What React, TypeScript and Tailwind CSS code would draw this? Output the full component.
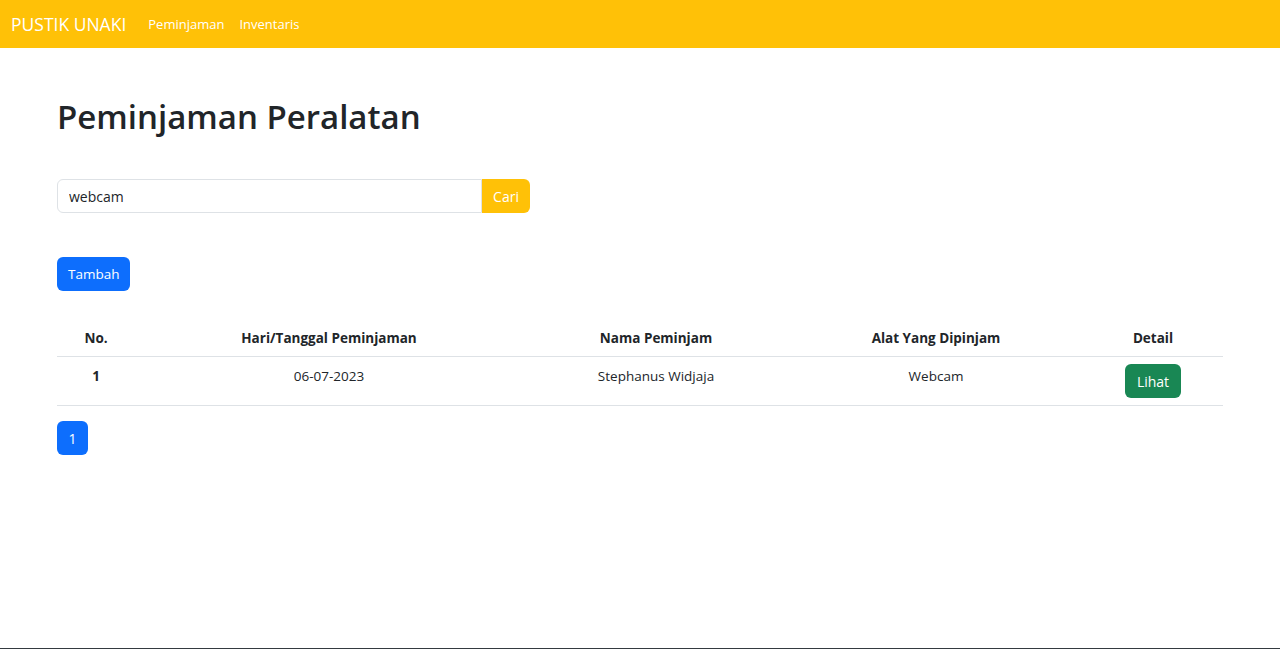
import { useState } from 'react'

const rows = [{ no: 1, tanggal: '06-07-2023', nama: 'Stephanus Widjaja', alat: 'Webcam' }]

export default function App() {
  const [q, setQ] = useState('webcam')

  return (
    <div className="bg-white text-[#212529] font-['Open_Sans','Noto_Sans',sans-serif]">
      <div className="min-h-[648px] flex flex-col">
        <nav className="h-12 bg-[#ffc107] flex items-center px-[11px] text-white">
          <span className="text-[17.5px] mr-[22px]">PUSTIK UNAKI</span>
          <a className="text-[13px] mr-[15px] pt-px" href="#">Peminjaman</a>
          <a className="text-[13px] pt-px" href="#">Inventaris</a>
        </nav>

        <main className="flex-1 px-[57px] pt-[45px] pb-12">
          <h1 className="text-[33px] leading-[48px] font-semibold mb-[38px]">Peminjaman Peralatan</h1>

          <form className="flex w-[473px] h-[34px]" onSubmit={(e) => e.preventDefault()}>
            <input
              value={q}
              onChange={(e) => setQ(e.target.value)}
              className="flex-1 min-w-0 border border-[#dee2e6] rounded-l-md px-[11px] text-[14px] outline-none"
            />
            <button className="w-12 bg-[#ffc107] text-white text-[14px] rounded-r-md">Cari</button>
          </form>

          <button className="mt-11 h-[34px] px-[11px] bg-[#0d6efd] text-white text-[13.5px] rounded-md">Tambah</button>

          <table className="mt-[27px] w-full text-[13.5px] text-center border-collapse">
            <thead>
              <tr className="border-b border-[#dee2e6]">
                <th className="w-[78px] pt-[9px] pb-[7px] leading-[22px] font-bold">No.</th>
                <th className="w-[388px] pt-[9px] pb-[7px] leading-[22px] font-bold">Hari/Tanggal Peminjaman</th>
                <th className="w-[266px] pt-[9px] pb-[7px] leading-[22px] font-bold">Nama Peminjam</th>
                <th className="w-[294px] pt-[9px] pb-[7px] leading-[22px] font-bold">Alat Yang Dipinjam</th>
                <th className="pt-[9px] pb-[7px] leading-[22px] font-bold">Detail</th>
              </tr>
            </thead>
            <tbody>
              {rows.map((r) => (
                <tr key={r.no} className="border-b border-[#dee2e6] align-top">
                  <td className="py-2 leading-[22px] font-bold">{r.no}</td>
                  <td className="py-2 leading-[22px]">{r.tanggal}</td>
                  <td className="py-2 leading-[22px]">{r.nama}</td>
                  <td className="py-2 leading-[22px]">{r.alat}</td>
                  <td className="pt-[7px] pb-[7px]">
                    <button className="h-[34px] px-3 bg-[#198754] text-white text-[14px] rounded-md">Lihat</button>
                  </td>
                </tr>
              ))}
            </tbody>
          </table>

          <div className="mt-[15px] flex">
            <button className="w-[31px] h-[34px] bg-[#0d6efd] text-white text-[14px] rounded-md">1</button>
          </div>
        </main>
      </div>

      <footer className="h-px bg-[#343a40]" />
    </div>
  )
}
